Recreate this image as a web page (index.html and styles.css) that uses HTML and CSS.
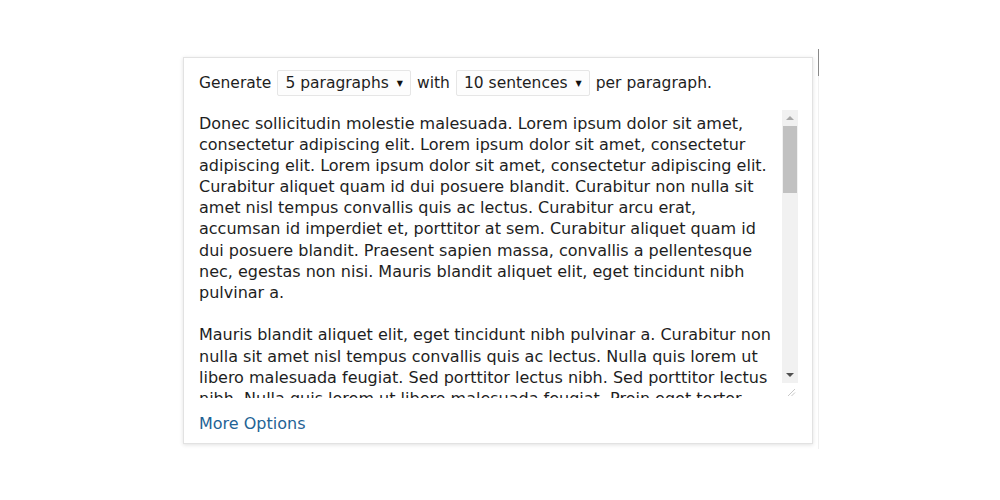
FILE: index.html
```html
<!DOCTYPE html>
<html>
<head>
<meta charset="utf-8">
<link rel="stylesheet" href="styles.css">
</head>
<body>
<div class="stage">
  <div class="card">
    <div class="controls">
      <span class="label">Generate</span>
      <span class="select">5 paragraphs <span class="caret">▼</span></span>
      <span class="label">with</span>
      <span class="select">10 sentences <span class="caret">▼</span></span>
      <span class="label">per paragraph.</span>
    </div>
    <div class="textbox">
      <div class="text">
        <p>Donec sollicitudin molestie malesuada. Lorem ipsum dolor sit amet,<br>consectetur adipiscing elit. Lorem ipsum dolor sit amet, consectetur<br>adipiscing elit. Lorem ipsum dolor sit amet, consectetur adipiscing elit.<br>Curabitur aliquet quam id dui posuere blandit. Curabitur non nulla sit<br>amet nisl tempus convallis quis ac lectus. Curabitur arcu erat,<br>accumsan id imperdiet et, porttitor at sem. Curabitur aliquet quam id<br>dui posuere blandit. Praesent sapien massa, convallis a pellentesque<br>nec, egestas non nisi. Mauris blandit aliquet elit, eget tincidunt nibh<br>pulvinar a.</p>
        <p>Mauris blandit aliquet elit, eget tincidunt nibh pulvinar a. Curabitur non<br>nulla sit amet nisl tempus convallis quis ac lectus. Nulla quis lorem ut<br>libero malesuada feugiat. Sed porttitor lectus nibh. Sed porttitor lectus<br>nibh. Nulla quis lorem ut libero malesuada feugiat. Proin eget tortor</p>
      </div>
      <div class="scrollcol">
        <div class="scrollbar">
          <div class="sbtn up"><span class="tri-up"></span></div>
          <div class="thumb"></div>
          <div class="track"></div>
          <div class="sbtn down"><span class="tri-down"></span></div>
        </div>
        <div class="grip">
          <svg width="15" height="15" viewBox="0 0 15 15"><path d="M6 13 L13 6 M9.5 13 L13 9.5" stroke="#c8c8c8" stroke-width="1" fill="none"/></svg>
        </div>
      </div>
    </div>
    <div class="footer"><a class="more">More Options</a></div>
  </div>
  <div class="edge">
    <div class="edge-dark"></div>
  </div>
</div>
</body>
</html>
```
FILE: styles.css
```css
html, body {
  margin: 0;
  padding: 0;
  background: #ffffff;
}
body {
  font-family: "DejaVu Sans", Verdana, sans-serif;
  font-size: 16px;
  color: #1e1e1e;
}
.stage {
  display: flex;
  align-items: flex-start;
  padding: 57px 0 0 183px;
  gap: 5px;
}
.card {
  width: 630px;
  box-sizing: border-box;
  border: 1px solid #e2e2e2;
  box-shadow: 0 1px 4px rgba(0,0,0,0.12);
  background: #fff;
  padding: 12px 14px 0 15px;
}
.controls {
  display: flex;
  align-items: center;
  height: 26px;
  gap: 6px;
  white-space: nowrap;
  font-size: 15.5px;
}
.select {
  display: inline-flex;
  align-items: center;
  height: 24px;
  padding: 0 7px 0 7px;
  border: 1px solid #e6e6e6;
  background: #fdfdfd;
  border-radius: 2px;
}
.caret {
  font-size: 8px;
  margin-left: 8px;
  color: #111;
}
.textbox {
  display: flex;
  margin-top: 14px;
  height: 288px;
}
.text {
  flex: 1;
  height: 288px;
  overflow: hidden;
  padding-top: 3px;
  box-sizing: border-box;
  line-height: 21.1px;
  white-space: nowrap;
}
.text p {
  margin: 0 0 21.6px 0;
}
.scrollcol {
  width: 16px;
  display: flex;
  flex-direction: column;
}
.scrollbar {
  height: 273px;
  display: flex;
  flex-direction: column;
  background: #f1f1f1;
}
.sbtn {
  height: 16px;
  display: flex;
  align-items: center;
  justify-content: center;
}
.tri-up {
  width: 0; height: 0;
  border-left: 4px solid transparent;
  border-right: 4px solid transparent;
  border-bottom: 4px solid #a8a8a8;
}
.tri-down {
  width: 0; height: 0;
  border-left: 4px solid transparent;
  border-right: 4px solid transparent;
  border-top: 4px solid #505050;
}
.thumb {
  height: 67px;
  background: #c1c1c1;
  margin: 0 1px;
}
.track {
  flex: 1;
}
.grip {
  height: 15px;
  background: #fff;
}
.grip svg { display: block; }
.footer {
  padding: 15px 0 9px 0;
  line-height: 21px;
}
.more {
  color: #1f6395;
  text-decoration: none;
}
.edge {
  width: 1px;
  height: 400px;
  margin-top: -8px;
  background: #f0f0f0;
}
.edge-dark {
  height: 27px;
  background: #8a8a8a;
}
```
